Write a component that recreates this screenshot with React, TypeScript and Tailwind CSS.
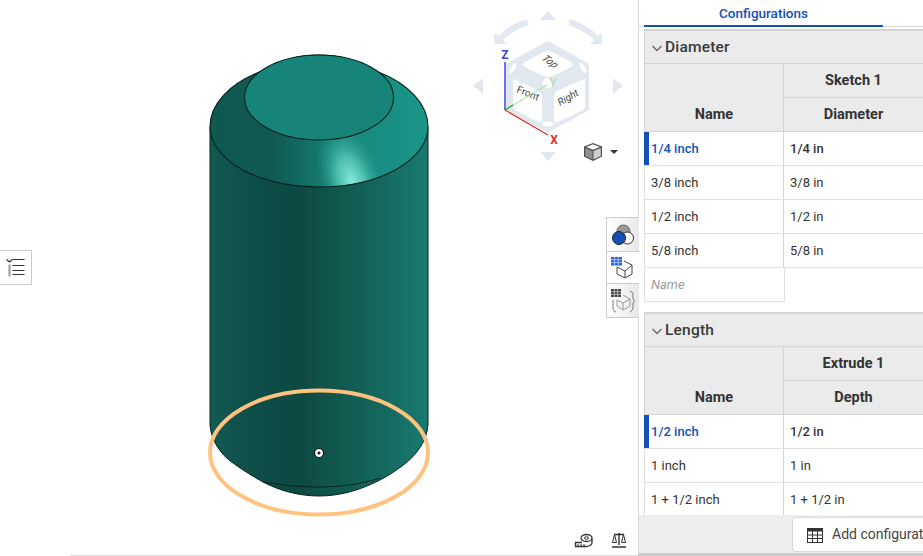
import React from "react";

type Row = { name: string; value: string };

const BLUE = "#1351b4";

const ConfigTable: React.FC<{ title: string; feature: string; param: string; rows: Row[]; showNew?: boolean }> = ({
  title,
  feature,
  param,
  rows,
  showNew,
}) => (
  <div className="w-[300px] text-[#333]">
    {/* section title */}
    <div className="flex h-[35px] items-center border border-[#d4d4d4] border-t-2 bg-[#ebebeb] pl-[5px] pt-[2px]">
      <svg width="14" height="14" viewBox="0 0 14 14" className="mr-px">
        <path d="M2.5 5l4.5 4.5L11.5 5" fill="none" stroke="#666" strokeWidth="1.3" />
      </svg>
      <span className="text-[15.500px] font-medium tracking-[0.2px] text-[#3a3a3a]">{title}</span>
    </div>

    {/* column heads */}
    <div className="flex h-[68px] border-b border-l border-[#d4d4d4] bg-[#ebebeb] text-[14.500px] font-bold">
      <div className="flex w-[139px] items-end justify-center border-r border-[#d4d4d4] pb-[5px]">Name</div>
      <div className="flex flex-1 flex-col">
        <div className="flex h-[33px] w-[139px] items-center justify-center">{feature}</div>
        <div className="flex flex-1 items-center border-t border-[#d4d4d4]">
          <span className="w-[139px] text-center">{param}</span>
        </div>
      </div>
    </div>

    {rows.map((row, i) => (
      <div key={row.name} className="flex h-[34px] items-center border-b border-[#e0e0e0] bg-white text-[13px]">
        <div
          className={
            i === 0
              ? "flex h-full w-[140px] items-center border-l-[5px] border-r border-l-[#1351b4] border-r-[#d4d4d4] pl-[2px] font-medium text-[#1351b4]"
              : "flex h-full w-[140px] items-center border-l border-r border-l-[#e0e0e0] border-r-[#d4d4d4] pl-[6px]"
          }
        >
          {row.name}
        </div>
        <div className={i === 0 ? "pl-[6px] font-medium" : "pl-[6px]"}>{row.value}</div>
      </div>
    ))}

    {showNew && (
      <div className="flex h-[34px] w-[141px] items-center border-b border-l border-r border-[#e0e0e0] pl-[6px] text-[13px] italic text-[#9a9a9a]">
        Name
      </div>
    )}
  </div>
);

const CONE = "M210 127C210 105 228 84 262 71C280 60 300 55 319 55C338 55 358 60 376 71C410 84 428 105 428 127A109 60 0 0 1 210 127Z";

const Model: React.FC = () => (
  <svg width="638" height="556" viewBox="0 0 638 556" className="block">
    <defs>
      <linearGradient id="body" x1="210" x2="428" y1="0" y2="0" gradientUnits="userSpaceOnUse">
        <stop offset="0" stopColor="#125a52" />
        <stop offset="0.15" stopColor="#0f504a" />
        <stop offset="0.4" stopColor="#0e4843" />
        <stop offset="0.6" stopColor="#10594f" />
        <stop offset="1" stopColor="#197a6f" />
      </linearGradient>
      <linearGradient id="cone" x1="210" x2="428" y1="0" y2="0" gradientUnits="userSpaceOnUse">
        <stop offset="0" stopColor="#0f5850" />
        <stop offset="0.3" stopColor="#0f5a52" />
        <stop offset="0.6" stopColor="#19857a" />
        <stop offset="1" stopColor="#1a978a" />
      </linearGradient>
      <radialGradient id="shine" cx="0" cy="0" r="1" gradientUnits="userSpaceOnUse" gradientTransform="translate(352 182) rotate(-18) scale(32 62)">
        <stop offset="0" stopColor="#86eede" />
        <stop offset="0.4" stopColor="#5ccdbd" stopOpacity="0.8" />
        <stop offset="1" stopColor="#1a978a" stopOpacity="0" />
      </radialGradient>
      <clipPath id="coneClip">
        <path d={CONE} />
      </clipPath>
    </defs>

    {/* cylinder body with the bump underneath */}
    <path
      d="M210 127L210 425C211 440 220 454 233 463C244 471 254 477 263 482C280 491 300 496 319 496C338 496 358 491 378 481C386 477 394 472 402 466C416 456 427 441 428 425L428 127Z"
      fill="url(#body)"
      stroke="#08221f"
      strokeWidth="1"
    />
    <path d="M263 482C280 485 300 487 319 487C340 487 362 484 380 478" fill="none" stroke="#08221f" strokeWidth="1" />

    {/* top cone face */}
    <path d={CONE} fill="url(#cone)" />
    <g clipPath="url(#coneClip)">
      <rect x="280" y="110" width="140" height="80" fill="url(#shine)" />
    </g>
    <path d={CONE} fill="none" stroke="#08221f" strokeWidth="1.100" />
    <ellipse cx="319" cy="97.500" rx="74.500" ry="42.500" fill="#17847a" stroke="#08221f" strokeWidth="1.100" />

    {/* hovered circle */}
    <ellipse cx="319" cy="452.500" rx="109" ry="62" fill="none" stroke="#ffc27f" strokeWidth="4" />
    <circle cx="319" cy="453" r="4.500" fill="#fff" stroke="#111" strokeWidth="1.200" />
    <circle cx="319" cy="453" r="1.600" fill="#222" />
  </svg>
);

const NavCube: React.FC = () => (
  <svg width="160" height="160" viewBox="468 6 160 160" className="block">
    <g fill="#e1e8ef">
      <path d="M548 11l8 9h-16z" />
      <path d="M548 161l-8-9h16z" />
      <path d="M473 86l10-8v16z" />
      <path d="M623 86l-10-8v16z" />
      <path d="M527 19C514 23 505 29 499 36L494 33L495 44L507 44L503 40C509 34 517 29 528 25Z" />
      <path d="M569 19C582 23 592 29 598 36L602 33L602 44L590 44L594 40C588 34 580 29 569 25Z" />
    </g>
    <path d="M548 43L587 65V109L548 130L508 109V65Z" fill="#e1e8ef" stroke="#e1e8ef" strokeWidth="4" strokeLinejoin="round" />
    <g fill="#fff">
      <path d="M548 50L571 62C574 64 573 66 571 67L552 76C549 77 546 77 543 76L525 67C522 66 522 64 525 62Z" />
      <path d="M514 79L537 90C541 92 542 94 542 97V120C542 123 540 123 538 122L517 111C514 110 513 108 513 105V81C513 79 513 79 514 79Z" />
      <path d="M584 79L559 90C555 92 554 94 554 97V120C554 123 556 123 558 122L581 111C584 110 585 108 585 105V81C585 79 585 79 584 79Z" />
      <circle cx="548" cy="83" r="5.500" />
      <ellipse cx="548" cy="124" rx="6" ry="2.500" />
      <ellipse cx="513" cy="68" rx="2" ry="6" transform="rotate(30 513 68)" />
      <ellipse cx="583" cy="68" rx="2" ry="6" transform="rotate(-30 583 68)" />
    </g>
    <g fontFamily="Roboto, sans-serif" fontSize="10" fill="#444">
      <text transform="translate(541 59) rotate(35) skewX(-18)" fontStyle="italic">Top</text>
      <text transform="translate(516 92) rotate(22)">Front</text>
      <text transform="translate(560 106) rotate(-30)" fontStyle="italic">Right</text>
    </g>
    <line x1="505" y1="110" x2="547" y2="85" stroke="#9ade9a" strokeWidth="1" />
    <line x1="505" y1="110" x2="505" y2="62" stroke="#3c46e0" strokeWidth="1.500" />
    <line x1="505" y1="110" x2="548" y2="135" stroke="#e02b2b" strokeWidth="1.200" />
    <line x1="505" y1="110" x2="513" y2="105" stroke="#1fa31f" strokeWidth="1.200" />
    <g fontFamily="Roboto, sans-serif" fontSize="12" fontWeight="700" textAnchor="middle">
      <text x="505" y="59" fill="#3c46e0">Z</text>
      <text x="554" y="144" fill="#e02b2b">X</text>
      <text x="553" y="87" fill="#b5e2b5">Y</text>
    </g>
  </svg>
);

const CubeIcon: React.FC = () => (
  <svg width="20" height="20" viewBox="0 0 20 20" className="block">
    <path d="M10 1L19 4.500V14.500L10 19L1 14.500V4.500Z" fill="#4a4a4a" />
    <path d="M10 2.200L17 5L10 7.800L3 5Z" fill="#f4f4f4" />
    <path d="M2.200 6L9.500 9V17.500L2.200 14Z" fill="#8f8f8f" />
    <path d="M17.800 6L10.500 9V17.500L17.800 14Z" fill="#cfcfcf" />
  </svg>
);

const App: React.FC = () => {
  const diameters: Row[] = [
    { name: "1/4 inch", value: "1/4 in" },
    { name: "3/8 inch", value: "3/8 in" },
    { name: "1/2 inch", value: "1/2 in" },
    { name: "5/8 inch", value: "5/8 in" },
  ];
  const lengths: Row[] = [
    { name: "1/2 inch", value: "1/2 in" },
    { name: "1 inch", value: "1 in" },
    { name: "1 + 1/2 inch", value: "1 + 1/2 in" },
  ];

  return (
    <div className="flex h-[556px] w-[923px] overflow-hidden bg-white font-['Roboto',sans-serif]">
      {/* graphics area */}
      <div className="relative h-full w-[639px] shrink-0 border-r border-[#d4d4d4]">
        <Model />

        <div className="absolute left-[468px] top-[6px]">
          <NavCube />
        </div>
        <div className="absolute left-[583px] top-[142px]">
          <CubeIcon />
        </div>
        <div className="absolute left-[610px] top-[150px] h-0 w-0 border-x-[4px] border-t-[4px] border-x-transparent border-t-[#333]" />

        {/* list panel toggle */}
        <div className="absolute left-[-1px] top-[250px] flex h-[35px] w-[33px] items-center justify-center border border-[#ccc] bg-white">
          <svg width="20" height="20" viewBox="0 0 20 20">
            <path d="M0.500 1.500l3 2.500l3-2.500" fill="none" stroke="#333" strokeWidth="1.200" />
            <rect x="2.500" y="6.500" width="2" height="12" fill="#999" />
            <path d="M6.500 1.500H18.500M6.500 7.500H18.500M6.500 12.500H18.500M6.500 16.500H18.500" stroke="#333" strokeWidth="1" />
          </svg>
        </div>

        {/* view tools */}
        <div className="absolute left-[606px] top-[217px] flex w-[33px] flex-col border border-r-0 border-[#ccc]">
          <div className="flex h-[33px] items-center justify-center bg-linear-to-r from-white to-[#e8e8e8]">
            <svg width="24" height="24" viewBox="0 0 24 24">
              <circle cx="12.500" cy="8.500" r="6.500" fill="#999" stroke="#666" strokeWidth="1" />
              <circle cx="16.500" cy="15" r="6" fill="#fff" stroke="#333" strokeWidth="1" />
              <circle cx="8" cy="15" r="6.500" fill="#1351b4" stroke="#222" strokeWidth="1" />
            </svg>
          </div>
          <div className="flex h-[33px] items-center justify-center border-y border-[#ccc] bg-white">
            <svg width="24" height="24" viewBox="0 0 24 24">
              <rect x="0" y="1" width="11" height="8.500" fill="#2a62d8" />
              <path d="M3.600 1V9.500M7.300 1V9.500M0 3.800H11M0 6.600H11" stroke="#cfe0ff" strokeWidth="0.700" />
              <path d="M13 5L21 9V18L14 22L6 18V11M6 11L14 15L21 9M14 15V22" fill="none" stroke="#444" strokeWidth="1" />
            </svg>
          </div>
          <div className="flex h-[33px] items-center justify-center bg-linear-to-r from-white to-[#e8e8e8]">
            <svg width="26" height="26" viewBox="0 0 26 26">
              <rect x="1" y="1" width="10" height="8" fill="#444" />
              <path d="M4.300 1V9M7.600 1V9M1 3.700H11M1 6.400H11" stroke="#ddd" strokeWidth="0.700" />
              <path d="M13 7L20 11V18L13 22L7 18V12M7 12L13 15L20 11M13 15V22" fill="none" stroke="#999" strokeWidth="1" />
              <path d="M20 3C23 4 23 6 23 9V11L24.500 13L23 15V19C23 21 22 23 20 24M3 12V20C3 22 4 24 6 24" fill="none" stroke="#555" strokeWidth="0.800" />
            </svg>
          </div>
        </div>

        {/* measure and mass tools */}
        <div className="absolute left-[574px] top-[532px] flex gap-[19px]">
          <svg width="19" height="17" viewBox="0 0 19 17">
            <ellipse cx="12.500" cy="6" rx="5.500" ry="3.500" fill="none" stroke="#333" strokeWidth="1.300" />
            <ellipse cx="12.500" cy="6" rx="2" ry="1.300" fill="none" stroke="#333" strokeWidth="1" />
            <path d="M18 6.500V11C18 13 15 14.500 12 14.500H1.500V10.500H8" fill="none" stroke="#333" strokeWidth="1.300" />
            <path d="M4 12V14.500M7 12V14.500M10 12V14.500" stroke="#333" strokeWidth="1" />
          </svg>
          <svg width="14" height="16" viewBox="0 0 14 16">
            <path d="M2 2.500H12M7 1V13M0 15H14" stroke="#333" strokeWidth="1.400" fill="none" />
            <path d="M2.500 2.500L0.500 10.500H4.500ZM11.500 2.500L9.500 10.500H13.500Z" fill="none" stroke="#333" strokeWidth="1" />
          </svg>
        </div>

        <div className="absolute bottom-0 left-[70px] right-0 h-px bg-[#ddd]" />
      </div>

      {/* configurations panel */}
      <div className="flex h-full min-w-0 flex-1 flex-col">
        <div className="flex h-[27px] shrink-0 border-b border-[#d9d9d9] pl-[5px]">
          <div
            className="flex h-[27px] w-[239px] items-center justify-center border-b-2 border-[#1351b4] pt-[2px] text-[13.500px] font-medium"
            style={{ color: BLUE }}
          >
            Configurations
          </div>
        </div>

        <div className="min-h-0 flex-1 overflow-hidden pl-[5px] pt-[2px]">
          <ConfigTable title="Diameter" feature="Sketch 1" param="Diameter" rows={diameters} showNew />
          <div className="h-[10px]" />
          <ConfigTable title="Length" feature="Extrude 1" param="Depth" rows={lengths} />
        </div>

        {/* add configuration bar */}
        <div className="flex h-[41px] shrink-0 items-start overflow-hidden border-b-[3px] border-[#ccc] bg-[#eeeeee] pl-[153px] pt-[2px]">
          <div className="flex h-[35px] w-[170px] shrink-0 items-center rounded-[3px] border border-[#d9d9d9] bg-white pl-[14px] text-[14px] text-[#444]">
            <svg width="16" height="16" viewBox="0 0 16 16" className="mr-[9px] shrink-0">
              <rect x="0.500" y="1.500" width="15" height="14" fill="none" stroke="#333" />
              <rect x="0.500" y="1.500" width="15" height="3" fill="#333" />
              <path d="M5.500 4V15M10.500 4V15M1 8H15M1 11.500H15" stroke="#333" />
            </svg>
            <span className="whitespace-nowrap">Add configuration</span>
          </div>
        </div>
      </div>
    </div>
  );
};

export default App;
